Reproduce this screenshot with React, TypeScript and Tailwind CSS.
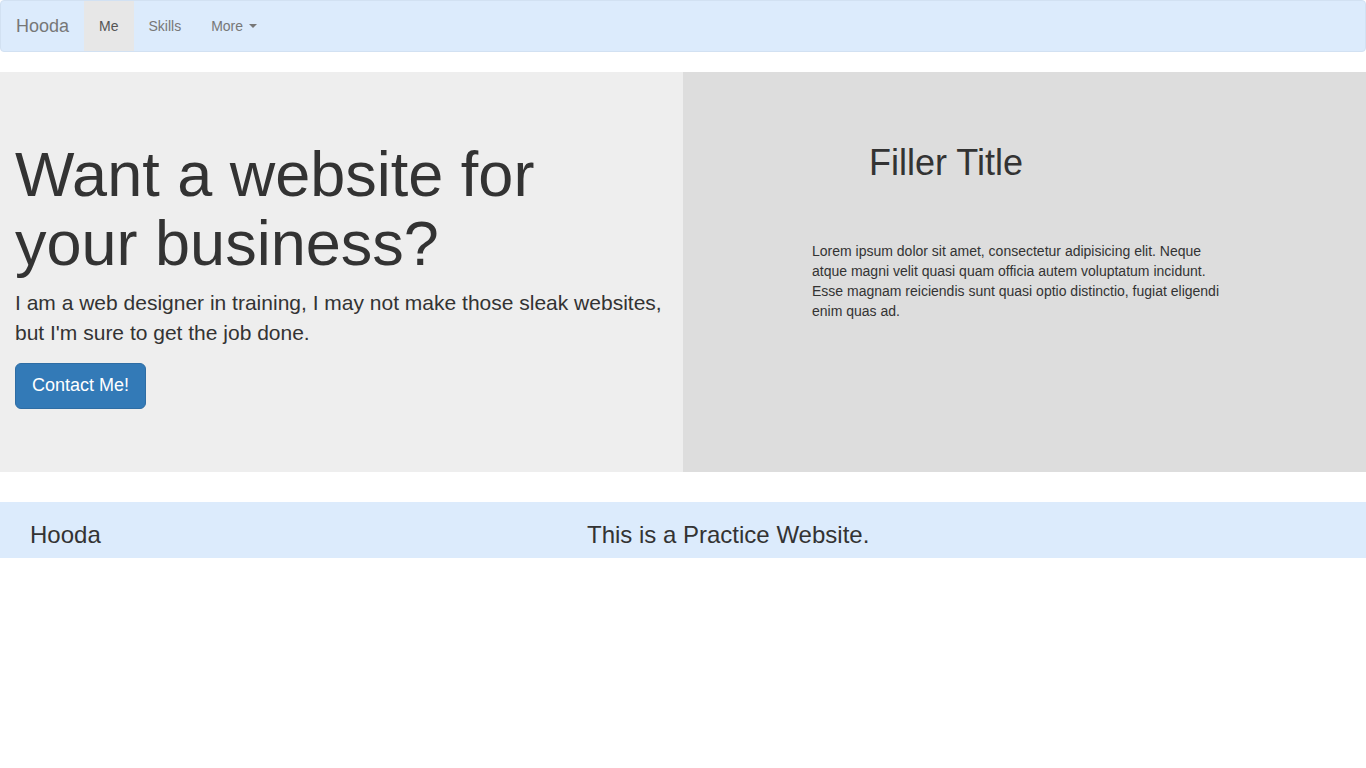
import React from 'react';

const font = { fontFamily: '"Liberation Sans", Arial, sans-serif' };

const Navbar: React.FC = () => (
    <nav className="h-[52px] mb-5 bg-[#dcebfc] border border-[#d2e1f2] rounded flex items-stretch">
        <a className="px-[15px] py-[15px] text-[18px] leading-[20px] text-[#777]">Hooda</a>
        <ul className="flex">
            <li className="px-[15px] py-[15px] text-[14px] leading-[20px] text-[#555] bg-[#e7e7e7]">Me</li>
            <li className="px-[15px] py-[15px] text-[14px] leading-[20px] text-[#777]">Skills</li>
            <li className="px-[15px] py-[15px] text-[14px] leading-[20px] text-[#777] flex items-center">
                More
                <span className="ml-[6px] inline-block w-0 h-0 border-t-[4px] border-t-[#777] border-x-[4px] border-x-transparent" />
            </li>
        </ul>
    </nav>
);

const App: React.FC = () => {
    return (
        <div className="min-h-screen bg-white text-[#333]" style={font}>
            <Navbar />

            <section className="grid grid-cols-2 h-[400px]">
                <div className="bg-[#eeeeee] px-[15px] pt-[48px] pb-[48px]">
                    <h1 className="mt-5 mb-[9px] text-[63px] leading-[1.1] font-normal">
                        Want a website for your business?
                    </h1>
                    <p className="text-[21px] leading-[30px] mb-[15px] font-light mr-[-14px]">
                        I am a web designer in training, I may not make those sleak websites, but I'm sure to get the job done.
                    </p>
                    <button className="h-[46px] px-4 text-[18px] leading-[1.33] text-white bg-[#337ab7] border border-[#2e6da4] rounded-md">
                        Contact Me!
                    </button>
                </div>
                <div className="bg-[#dddddd] pl-[129px] pt-[71px]">
                    <h1 className="ml-[57px] text-[36px] leading-[1.1] font-normal">Filler Title</h1>
                    <p className="mt-[58px] w-[425px] text-[14px] leading-[20px]">
                        Lorem ipsum dolor sit amet, consectetur adipisicing elit. Neque atque magni velit quasi quam officia autem voluptatum incidunt. Esse magnam reiciendis sunt quasi optio distinctio, fugiat eligendi enim quas ad.
                    </p>
                </div>
            </section>

            <footer className="mt-[30px] bg-[#dcebfc] h-[56px] flex">
                <h3 className="w-[587px] pl-[30px] mt-5 text-[24px] leading-[1.1] font-normal">Hooda</h3>
                <h3 className="mt-5 text-[24px] leading-[1.1] font-normal">This is a Practice Website.</h3>
            </footer>
        </div>
    );
};

export default App;
